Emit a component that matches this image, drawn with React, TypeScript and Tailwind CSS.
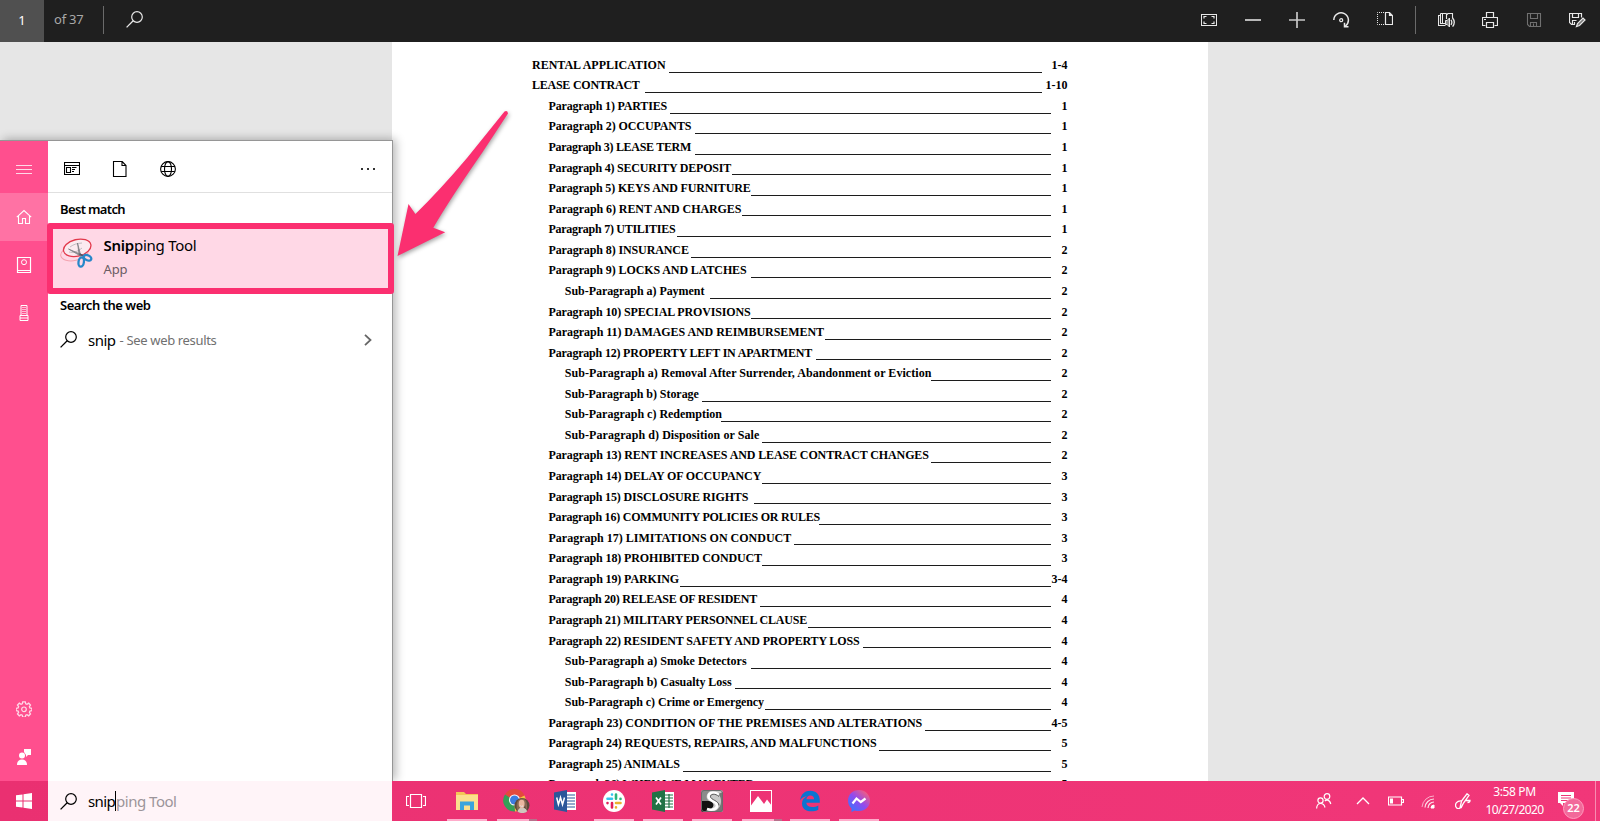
import { useLayoutEffect, useRef } from "react";
import type { ReactNode } from "react";

/* Text that spreads its letters to fill a given width. */
function Fit({ w, className = "", children }: { w: number; className?: string; children: ReactNode }) {
  const ref = useRef<HTMLSpanElement>(null);
  useLayoutEffect(() => {
    const el = ref.current;
    if (!el) return;
    el.style.letterSpacing = "0px";
    const natural = el.getBoundingClientRect().width;
    const n = (el.textContent || "").length;
    el.style.letterSpacing = `${(w - natural) / n}px`;
  }, [w]);
  return (
    <span ref={ref} className={`inline-block whitespace-pre shrink-0 ${className}`}>
      {children}
    </span>
  );
}

type Row = [level: number, text: string, end: number, lineStart: number, page: string];

const rows: Row[] = [
  [0, "RENTAL APPLICATION", 665.6, 669, "1-4"],
  [0, "LEASE CONTRACT", 639.6, 645, "1-10"],
  [1, "Paragraph 1) PARTIES", 667, 669.5, "1"],
  [1, "Paragraph 2) OCCUPANTS", 691.4, 694.5, "1"],
  [1, "Paragraph 3) LEASE TERM", 691, 694.5, "1"],
  [1, "Paragraph 4) SECURITY DEPOSIT", 731, 732.2, "1"],
  [1, "Paragraph 5) KEYS AND FURNITURE", 750.6, 751, "1"],
  [1, "Paragraph 6) RENT AND CHARGES", 741.4, 742.3, "1"],
  [1, "Paragraph 7) UTILITIES", 675.3, 676.6, "1"],
  [1, "Paragraph 8) INSURANCE", 688.8, 691, "2"],
  [1, "Paragraph 9) LOCKS AND LATCHES", 746.6, 751, "2"],
  [2, "Sub-Paragraph a) Payment", 704.4, 710, "2"],
  [1, "Paragraph 10) SPECIAL PROVISIONS", 750.6, 751, "2"],
  [1, "Paragraph 11) DAMAGES AND REIMBURSEMENT", 824, 824.5, "2"],
  [1, "Paragraph 12) PROPERTY LEFT IN APARTMENT", 812, 816, "2"],
  [2, "Sub-Paragraph a) Removal After Surrender, Abandonment or Eviction", 931.4, 931.4, "2"],
  [2, "Sub-Paragraph b) Storage", 698.8, 702.5, "2"],
  [2, "Sub-Paragraph c) Redemption", 722, 721, "2"],
  [2, "Sub-Paragraph d) Disposition or Sale", 759.4, 762, "2"],
  [1, "Paragraph 13) RENT INCREASES AND LEASE CONTRACT CHANGES", 928.8, 931, "2"],
  [1, "Paragraph 14) DELAY OF OCCUPANCY", 761.2, 762, "3"],
  [1, "Paragraph 15) DISCLOSURE RIGHTS", 748.2, 753.6, "3"],
  [1, "Paragraph 16) COMMUNITY POLICIES OR RULES", 820, 819.3, "3"],
  [1, "Paragraph 17) LIMITATIONS ON CONDUCT", 791.2, 794.3, "3"],
  [1, "Paragraph 18) PROHIBITED CONDUCT", 762, 762, "3"],
  [1, "Paragraph 19) PARKING", 679, 679.6, "3-4"],
  [1, "Paragraph 20) RELEASE OF RESIDENT", 757, 760.4, "4"],
  [1, "Paragraph 21) MILITARY PERSONNEL CLAUSE", 807, 808, "4"],
  [1, "Paragraph 22) RESIDENT SAFETY AND PROPERTY LOSS", 859.4, 862.5, "4"],
  [2, "Sub-Paragraph a) Smoke Detectors", 746.6, 751, "4"],
  [2, "Sub-Paragraph b) Casualty Loss", 731.6, 734.6, "4"],
  [2, "Sub-Paragraph c) Crime or Emergency", 764, 764.6, "4"],
  [1, "Paragraph 23) CONDITION OF THE PREMISES AND ALTERATIONS", 922.2, 925, "4-5"],
  [1, "Paragraph 24) REQUESTS, REPAIRS, AND MALFUNCTIONS", 876.6, 879.3, "5"],
  [1, "Paragraph 25) ANIMALS", 679.8, 683, "5"],
  [1, "Paragraph 26) WHEN WE MAY ENTER", 754, 756, "5"],
];

const starts = [532, 548.5, 564.8];

function TocRow({ row }: { row: Row }) {
  const [level, text, end, lineStart, page] = row;
  const start = starts[level];
  return (
    <div className="flex h-[20.57px] shrink-0 items-center" style={{ paddingLeft: start - 532 }}>
      <Fit w={end - start}>{text}</Fit>
      <div className="mt-[14.5px] h-px flex-1 bg-[#1c1c1c]" style={{ marginLeft: lineStart - end }} />
      <div className={`flex shrink-0 justify-end ${level === 0 ? "w-[26px]" : "w-[17px]"}`}>
        <span className="whitespace-pre">{page}</span>
      </div>
    </div>
  );
}

function Icon({ w = 16, h = 16, className = "", children }: { w?: number; h?: number; className?: string; children: ReactNode }) {
  return (
    <svg width={w} height={h} viewBox={`0 0 ${w} ${h}`} fill="none" stroke="currentColor" strokeWidth="1" className={`block shrink-0 ${className}`}>
      {children}
    </svg>
  );
}

const SearchIcon = () => (
  <Icon w={17} h={17}>
    <circle cx="11" cy="6" r="5.3" strokeWidth="1.2" />
    <path d="M7.2 9.8L.6 16.4" strokeWidth="1.3" />
  </Icon>
);

function TopBar() {
  return (
    <header className="flex h-[42px] shrink-0 items-start bg-[#1f1f1f] pr-px text-[#e8e8e8]">
      <div className="flex h-[42px] w-11 items-center justify-center bg-[#505050] text-[13px] text-white">1</div>
      <div className="flex h-10 w-[59px] items-center pl-[10px] text-[13px] text-[#a8a8a8]"><Fit w={29.5}>of 37</Fit></div>
      <div className="mt-1.5 h-7 w-px bg-[#6a6a6a]" />
      <div className="ml-[22px] mt-[11px]"><SearchIcon /></div>
      <div className="ml-auto flex h-10 items-center">
        <div className="flex w-11 justify-center"><Icon>
          <rect x=".5" y="2.5" width="15" height="11" />
          <path d="M3 6.5v-2h2.5M10.5 4.5H13v2M13 9.5v2h-2.500M5.500 11.500H3v-2" strokeWidth="1.200" />
        </Icon></div>
        <div className="flex w-11 justify-center"><div className="h-0.5 w-4 bg-[#b8b8b8]" /></div>
        <div className="flex w-11 justify-center"><Icon><path d="M0 8h16M8 0v16" stroke="#c8c8c8" strokeWidth="1.700" /></Icon></div>
        <div className="flex w-11 justify-center"><Icon w={17} h={17}>
          <path d="M.8 8A7.300 7.300 0 1 1 12.500 14M11.500 10.800v4h4" strokeWidth="1.500" />
          <circle cx="8.200" cy="8.200" r="1.500" strokeWidth="1.300" />
        </Icon></div>
        <div className="flex w-11 justify-center"><Icon className="-mt-0.5">
          <path d="M8.500 1.500h4l3 3v9h-7zM12.500 1.500v3h3" strokeWidth="1.200" />
          <path d="M7 1.500H.5v12H7" strokeDasharray="1 1" />
        </Icon></div>
        <div className="ml-2 mr-[9px] h-7 w-px bg-[#6a6a6a]" />
        <div className="flex w-[43px] justify-center"><Icon w={17}>
          <path d="M2.500 1.500h5.500l1 1 1-1h4.500v5M8.500 2v5M2.500 1.500v10h5M2.500 3.500h-2v10h7" strokeWidth="1.100" />
          <path d="M4.500 2v9.500" />
          <path d="M7.500 8.500v4h1.700l2.300 2.500V6L9.200 8.500z" fill="#8a8a8a" />
          <path d="M13 7.800c1 1.500 1 3.500 0 5M14.600 6c2 2.500 2 6 0 8.600" strokeWidth="1.300" />
        </Icon></div>
        <div className="flex w-11 justify-center"><Icon>
          <path d="M4.500 5.500v-5h7v5M3.500 13.500H.5v-8h15v8h-3" strokeWidth="1.200" />
          <path d="M4.500 10.500h7v5h-7z" strokeWidth="1.200" /><path d="M2 7.500h2" />
        </Icon></div>
        <div className="flex w-11 justify-center text-[#707070]"><Icon>
          <path d="M1.500 1.500h13v13H3.500l-2-2zM4.500 1.500v5h7v-5M4.500 14.500v-4h6v4M7.500 11.500v3" strokeWidth="1.100" />
        </Icon></div>
        <div className="flex w-[43px] justify-center"><Icon w={17}>
          <path d="M6 12.500H2.500l-2-2v-9h12v4M3.500 1.500v4h6v-4M3.500 12.500v-4h4M5.500 10v2" strokeWidth="1.200" />
          <path d="M7.500 14.500l1-3L14 6l2 2-5.500 5.500z" fill="#777" strokeWidth="1.200" />
        </Icon></div>
      </div>
    </header>
  );
}

const SnipIcon = () => (
  <svg width="33" height="31" viewBox="0 0 33 31" fill="none" className="mt-px block shrink-0">
    <ellipse cx="14.500" cy="15" rx="14" ry="7.500" transform="rotate(-12 14.500 15)" stroke="#f4a3ae" />
    <ellipse cx="17.200" cy="9.800" rx="14" ry="8.300" transform="rotate(-14 17.200 9.800)" fill="#fbeaf0" stroke="#e2374a" strokeWidth="1.300" />
    <path d="M10 9c4-3 7-3.500 12-4M9 14c4 1 8 0 13-4" stroke="#c2bcc2" />
    <path d="M8.500 11L21 18.300l.8-1.600zM17.500 5l1.700 12.500 1.500-.3z" fill="#9b9ba0" stroke="#77777c" strokeWidth=".7" />
    <path d="M19.500 16l4 2" stroke="#556" strokeWidth="1.600" />
    <ellipse cx="21.200" cy="24" rx="2.700" ry="4.700" transform="rotate(8 21.200 24)" stroke="#2787c9" strokeWidth="2.300" />
    <ellipse cx="27.500" cy="19.800" rx="4" ry="2.500" transform="rotate(25 27.500 19.800)" stroke="#2787c9" strokeWidth="2.300" />
  </svg>
);

function Rail() {
  return (
    <nav className="flex w-12 shrink-0 flex-col bg-[#ff4f8e] text-[#ffd9e8]">
      <div className="flex h-[52px] items-center justify-center pt-[5px]"><Icon><path d="M0 3.500h16M0 7.500h16M0 11.500h16" /></Icon></div>
      <div className="flex h-12 items-center justify-center bg-[#ff72a4] text-white"><Icon>
        <path d="M.8 8.200L8 1.500l7.200 6.700M2.500 7v7.500h4v-5h3v5h4V7" strokeWidth="1.100" />
      </Icon></div>
      <div className="flex h-12 items-center justify-center text-white"><Icon>
        <path d="M1.500.5h13v15h-13zM1.500 13.500h13" strokeWidth="1.200" /><circle cx="8" cy="5.200" r="2.500" />
      </Icon></div>
      <div className="flex h-12 items-center justify-center text-white"><Icon>
        <path d="M5 .5h6v10H5zM4 10.500h8v5H4zM4 13h8" /><path d="M7 2v9M9 2v9" strokeDasharray="1 1" strokeWidth="1.200" />
      </Icon></div>
      <div className="mt-auto flex h-12 items-center justify-center"><Icon>
        <path d="M6.700.8h2.600l.4 2 1.300.5 1.700-1.100 1.800 1.800-1.100 1.700.5 1.300 2 .4v2.200l-2 .4-.5 1.300 1.100 1.700-1.800 1.800-1.700-1.100-1.300.5-.4 2H6.700l-.4-2-1.300-.5-1.700 1.100L1.500 13l1.100-1.700-.5-1.300-2-.4V7.400l2-.4.5-1.300L1.500 4l1.800-1.800L5 3.300l1.300-.5z" strokeWidth="1.300" />
        <circle cx="8" cy="8.300" r="2.300" strokeWidth="1.200" />
      </Icon></div>
      <div className="flex h-12 items-center justify-center text-white"><Icon>
        <circle cx="6" cy="6.500" r="3" fill="currentColor" stroke="none" />
        <path d="M1 16c0-3.500 1.800-5.500 5-5.500s5 2 5 5.500zM8 0h7v6h-3l-2 2V6L8 3z" fill="currentColor" stroke="none" />
      </Icon></div>
    </nav>
  );
}

function SearchPanel() {
  return (
    <aside className="absolute left-0 top-[140px] z-10 flex h-[641px] w-[393px] border-r border-t border-[#969696] bg-white shadow-[3px_-1px_9px_rgba(0,0,0,0.28)]">
      <Rail />
      <div className="flex min-w-0 flex-1 flex-col">
        <div className="flex h-[52px] shrink-0 items-center border-b border-[#e0e0e0] pl-4 pt-1 text-black">
          <Icon>
            <path d="M.5 1.500h15v12H.5zM.5 4.500h15M2.500 6.500h4v5h-4zM8 6.500h4.500M8 8.500h3M8 10.500h2" strokeWidth="1.100" />
          </Icon>
          <Icon className="ml-8"><path d="M1.500.5h8.700l3.800 4v11H1.500zM10 .5v4h4" strokeWidth="1.100" /></Icon>
          <Icon className="ml-8"><circle cx="8" cy="8" r="7.400" strokeWidth="1.100" /><ellipse cx="8" cy="8" rx="3.500" ry="7.400" strokeWidth="1.100" /><path d="M1.200 5.500h13.600M1.200 10.500h13.600" /></Icon>
          <div className="ml-auto mr-4 flex gap-1 pr-px">
            <i className="size-0.5 bg-[#333]" /><i className="size-0.5 bg-[#333]" /><i className="size-0.5 bg-[#333]" />
          </div>
        </div>
        <div className="flex h-[30px] shrink-0 items-center pl-3 pt-1 text-[13px] font-semibold"><Fit w={65}>Best match</Fit></div>
        <div className="-ml-[1.500px] flex h-[71px] w-[347.500px] shrink-0 items-start rounded-[3px] border-[6.500px] border-[#fb2f70] bg-[#ffd8e6] pl-[7px] pt-2">
          <SnipIcon />
          <div className="-mt-1 ml-[11px] flex flex-col">
            <div className="h-6 text-[15px] leading-6"><Fit w={93}><b className="font-semibold">Snip</b>ping Tool</Fit></div>
            <div className="h-6 text-[13px] leading-6 text-[#6b5c63]"><Fit w={24}>App</Fit></div>
          </div>
        </div>
        <div className="flex h-6 shrink-0 items-center pl-3 text-[13px] font-semibold"><Fit w={90.500}>Search the web</Fit></div>
        <div className="mt-1.5 flex h-8 shrink-0 items-center pl-3 pr-5">
          <div className="-mt-0.5"><SearchIcon /></div>
          <div className="ml-[11px] text-[15px]"><Fit w={27.500}>snip</Fit></div>
          <div className="ml-1 pt-px text-[13px] text-[#707070]"><Fit w={97}>- See web results</Fit></div>
          <Icon w={8} h={12} className="ml-auto -mt-px"><path d="M1 .8L6.500 6 1 11.200" stroke="#666" strokeWidth="1.800" /></Icon>
        </div>
      </div>
    </aside>
  );
}

function Arrow() {
  return (
    <svg className="pointer-events-none absolute left-[390px] top-[100px] z-20 drop-shadow-[1px_2px_2px_rgba(0,0,0,0.35)]" width="130" height="165" viewBox="390 100 130 165">
      <path d="M397.500 256L408.500 204L415.400 214Q440 190 467 158L504.500 111.500Q507.500 110 508 113.500L482 153Q450 199 433.300 227.700L445.200 232.300Z" fill="#fb2f70" />
    </svg>
  );
}

function TaskButton({ bar = 1, children }: { bar?: number; children: ReactNode }) {
  return (
    <div className="flex h-10 w-[49px] shrink-0 flex-col items-center">
      <div className="flex h-[38px] w-full items-center justify-center pt-px">{children}</div>
      {bar > 0 && (
        <div className={`flex h-0.5 w-10 ${bar === 2 ? "translate-x-px" : ""}`}>
          <div className="flex-1 bg-[#ffaccb]" />
          {bar === 2 && <div className="w-2 bg-[#b8718c]" />}
        </div>
      )}
    </div>
  );
}

const S = ({ children }: { children: ReactNode }) => (
  <svg width="24" height="24" viewBox="0 0 24 24" className="block" fill="none">{children}</svg>
);

function Taskbar() {
  return (
    <footer className="relative z-10 flex h-10 shrink-0 bg-gradient-to-r from-[#ea3071] to-[#f13779] text-white">
      <div className="flex w-12 shrink-0 items-center justify-center"><Icon>
        <path d="M0 2.300l6.500-.9v6.100H0zM7.500 1.200L16 0v7.500H7.500zM0 8.500h6.500v6.100L0 13.700zM7.500 8.500H16V16l-8.500-1.200z" fill="currentColor" stroke="none" />
      </Icon></div>
      <div className="flex w-[344px] shrink-0 items-center bg-[#fff4f8] pl-3 text-black">
        <SearchIcon />
        <div className="ml-[11px] flex h-6 items-center text-[15px]">
          <Fit w={27}>snip</Fit>
          <div className="h-5 w-px bg-black" />
          <Fit w={60.500} className="text-[#9c959a]">ping Tool</Fit>
        </div>
      </div>
      <div className="flex w-[50.500px] shrink-0 items-center justify-center pr-[2.500px]"><Icon w={20}>
        <path d="M4.500 1.500h11v13h-11zM3 3.500H.5v9H3M17 3.500h2.500v9H17" strokeWidth="1.200" />
      </Icon></div>

      <TaskButton><S>
        <path d="M1 3h8l2 2h12v16H1z" fill="#f4c556" /><path d="M1 6h22v15H1z" fill="#fbdf8d" />
        <path d="M5 21v-8.500h14V21h-4v-4.500H9V21z" fill="#3aa4dc" />
      </S></TaskButton>
      <TaskButton bar={2}><svg width="28" height="26" viewBox="0 0 28 26" className="ml-0.5 block">
        <path d="M11.500 12.500L2 6.500A11 11 0 0 1 21.500 7.500z" fill="#e34a3c" />
        <path d="M11.500 12.500L12 23.500A11 11 0 0 1 2 6.500z" fill="#34a058" />
        <path d="M11.500 12.500L21.500 7.500A11 11 0 0 1 12 23.500z" fill="#f5c53d" />
        <circle cx="11.500" cy="12" r="5.500" fill="#fff" /><circle cx="11.500" cy="12" r="4.500" fill="#3c7de0" />
        <circle cx="19" cy="17.500" r="7.500" fill="#5d4a3c" />
        <path d="M14.500 23.500c0-2 2-4 4.500-4s5 2 5 4c-2.500 2-7 2-9.500 0z" fill="#cfc8be" />
        <path d="M14 22c-1-6 0-11 5-11.500 4.500 0 5.500 5 5 11l-1.500-2-1-6h-4.500L16 21z" fill="#8a6a52" />
        <ellipse cx="18.700" cy="16" rx="3" ry="4.200" fill="#e9b7a0" /><path d="M17.300 18q1.500 1 2.800 0" stroke="#fff" />
      </svg></TaskButton>
      <TaskButton bar={0}><S>
        <path d="M11 3h12v18H11z" fill="#fff" /><path d="M14 6h8M14 9h8M14 12h8M14 15h8M14 18h8" stroke="#2b579a" strokeWidth="1.200" />
        <path d="M1 3.500L14 1v22L1 20.500z" fill="#2b579a" /><path d="M3.700 8.500l1.700 7 2.100-7 2 7 2-7" stroke="#fff" strokeWidth="1.500" />
      </S></TaskButton>
      <TaskButton><S>
        <circle cx="12" cy="12" r="11" fill="#fff" />
        <g strokeWidth="2.600" strokeLinecap="round">
          <path d="M10 5.500v.1M5.500 9.800H10" stroke="#36c5f0" /><path d="M14 5.500v4.300M18.500 9.800v.1" stroke="#2eb67d" />
          <path d="M14 14h4.500M14 18.400v.1" stroke="#ecb22e" /><path d="M10 14v4.500M5.500 14v.1" stroke="#e01e5a" />
        </g>
      </S></TaskButton>
      <TaskButton><S>
        <path d="M11 3h12v18H11z" fill="#fff" /><path d="M14 6h8M14 9h8M14 12h8M14 15h8M14 18h8M18 5v14" stroke="#207245" strokeWidth="1.200" />
        <path d="M1 3.500L14 1v22L1 20.500z" fill="#207245" /><path d="M5 8.500l5 7M10 8.500l-5 7" stroke="#fff" strokeWidth="1.700" />
      </S></TaskButton>
      <TaskButton><S>
        <rect x="1" y="1" width="22" height="22" rx="2.500" fill="#c9c9c9" />
        <path d="M2.500 1H12C6 4 5 9 9 12H1V3z" fill="#8b8b8b" />
        <path d="M1 12h8c5 1 6 5 2 8-2 1.500-5 1.500-8 3a2 2 0 0 1-2-2z" fill="#111" />
        <path d="M18 5c3 2 4 8 2 12-2 4-5 5-8 6h9a2 2 0 0 0 2-2V3z" fill="#777" />
        <path d="M18.500 6C16 2.500 8.500 3 8.500 7.500c0 4.500 8.500 4 8.500 9 0 4-5 5-10 3.500" stroke="#fff" strokeWidth="2.600" />
        <path d="M19 7.500C15 4 10.500 5 10.500 7.500c0 3.500 8.500 4 8.500 9" stroke="#333" strokeWidth=".8" />
        <rect x="1.500" y="1.500" width="21" height="21" rx="2.500" stroke="#6b6b6b" />
      </S></TaskButton>
      <TaskButton bar={2}><S>
        <rect x="1.500" y="1.500" width="21" height="21" stroke="#fff" />
        <path d="M2 16.500L9 7l6 8 3-4.500 5 6.500v6H2z" fill="#fff" />
      </S></TaskButton>
      <TaskButton><S>
        <path d="M2 11.500C3 5 7 1.800 12.300 1.800c6 0 9.500 4.200 9.500 9.700v2.300H8.300c.3 3 2.600 4.300 5.800 4.300 2.500 0 4.500-.7 6.200-1.700v4.300c-2 1-4.500 1.600-7.300 1.600-5.700 0-9-3-9-7.800 0-3.500 2-6 5-7.300-3.500.2-5.500 1.800-7 4.300zM8.400 10.300h7.700c0-2.400-1.300-3.900-3.700-3.900-2.200 0-3.700 1.500-4 3.900z" fill="#0a74d1" />
      </S></TaskButton>
      <TaskButton><S>
        <defs><linearGradient id="msg" x1="3" y1="22" x2="21" y2="2" gradientUnits="userSpaceOnUse"><stop stopColor="#3378ff" /><stop offset=".5" stopColor="#914aef" /><stop offset="1" stopColor="#ff6072" /></linearGradient></defs>
        <path d="M12 1C5.700 1 1 5.600 1 11.600c0 3.200 1.300 6 3.500 7.900V23l3.200-1.600c1.300.4 2.800.7 4.300.7 6.300 0 11-4.600 11-10.500S18.300 1 12 1z" fill="url(#msg)" />
        <path d="M5.500 14.500l4-5 4.300 3.500 4.700-3.500" stroke="#fff" strokeWidth="2.200" />
      </S></TaskButton>

      <div className="ml-auto flex items-center">
        <Icon><circle cx="11" cy="3.500" r="2.800" strokeWidth="1.200" /><circle cx="4.500" cy="7.500" r="2.600" strokeWidth="1.200" />
          <path d="M.6 15.500c.2-3.500 1.500-5 4-5s3.900 1.700 4.400 4M8.800 8c1-1.200 4.500-2 6 3" strokeWidth="1.200" /></Icon>
        <Icon w={14} h={8} className="ml-[24px]"><path d="M1 7l6-6 6 6" strokeWidth="1.300" /></Icon>
        <Icon className="ml-[18px]"><path d="M.5 4h13v8H.5zM14 6.500h1.500v3H14" strokeWidth="1.200" /><path d="M2 5.500h3v5H2z" fill="currentColor" stroke="none" /></Icon>
        <Icon className="ml-[17px]"><path d="M1 14A12 12 0 0 1 13 3" strokeOpacity=".6" /><path d="M4 14.500A9 9 0 0 1 13 6M7 15a6 6 0 0 1 6-6" strokeOpacity=".85" strokeWidth="1.200" />
          <path d="M10 15a3 3 0 0 1 3-3v3z" fill="currentColor" /></Icon>
        <Icon className="ml-[18px]"><path d="M5 15L6.500 8 12 .8l2 1.600L8.500 10 6 15M6.500 8C2 7.500-.5 11 1 14s5 1.500 6.500-2M10 7.500h5c0 1.500-1 2-2.500 2" strokeWidth="1.300" /></Icon>
        <div className="ml-[14px] flex w-[59px] flex-col items-center text-[12px] leading-[18px]">
          <Fit w={42.500}>3:58 PM</Fit><Fit w={58}>10/27/2020</Fit>
        </div>
        <div className="relative ml-[14px] flex w-[37px]">
          <Icon className="-mt-1"><path d="M0 1h16v11H5v3l-3-3H0z" fill="currentColor" stroke="none" /><path d="M3 4.500h10M3 7h10M3 9.500h7" stroke="#ee3577" /></Icon>
          <div className="absolute left-[5px] top-[3px] flex size-[21px] items-center justify-center rounded-full border border-[#ff9dbe] bg-[#f2699a] text-[11px] font-semibold">22</div>
        </div>
        <div className="mr-1 h-10 w-px bg-[#f88bb1]" />
      </div>
    </footer>
  );
}

export default function App() {
  return (
    <div className="relative flex h-[821px] w-[1600px] flex-col overflow-hidden bg-[#e6e6e6] font-['Noto_Sans','Open_Sans',sans-serif] text-black">
      <TopBar />
      <main className="flex min-h-0 flex-1 justify-center overflow-hidden">
        <div className="flex w-[816px] flex-col overflow-hidden bg-white pl-[140px] pr-[140.500px] pt-[12.500px] font-['Liberation_Serif',serif] text-[12px] font-bold leading-[20px]">
          {rows.map((r) => <TocRow key={r[1] + r[2]} row={r} />)}
        </div>
      </main>
      <SearchPanel />
      <Arrow />
      <Taskbar />
    </div>
  );
}
